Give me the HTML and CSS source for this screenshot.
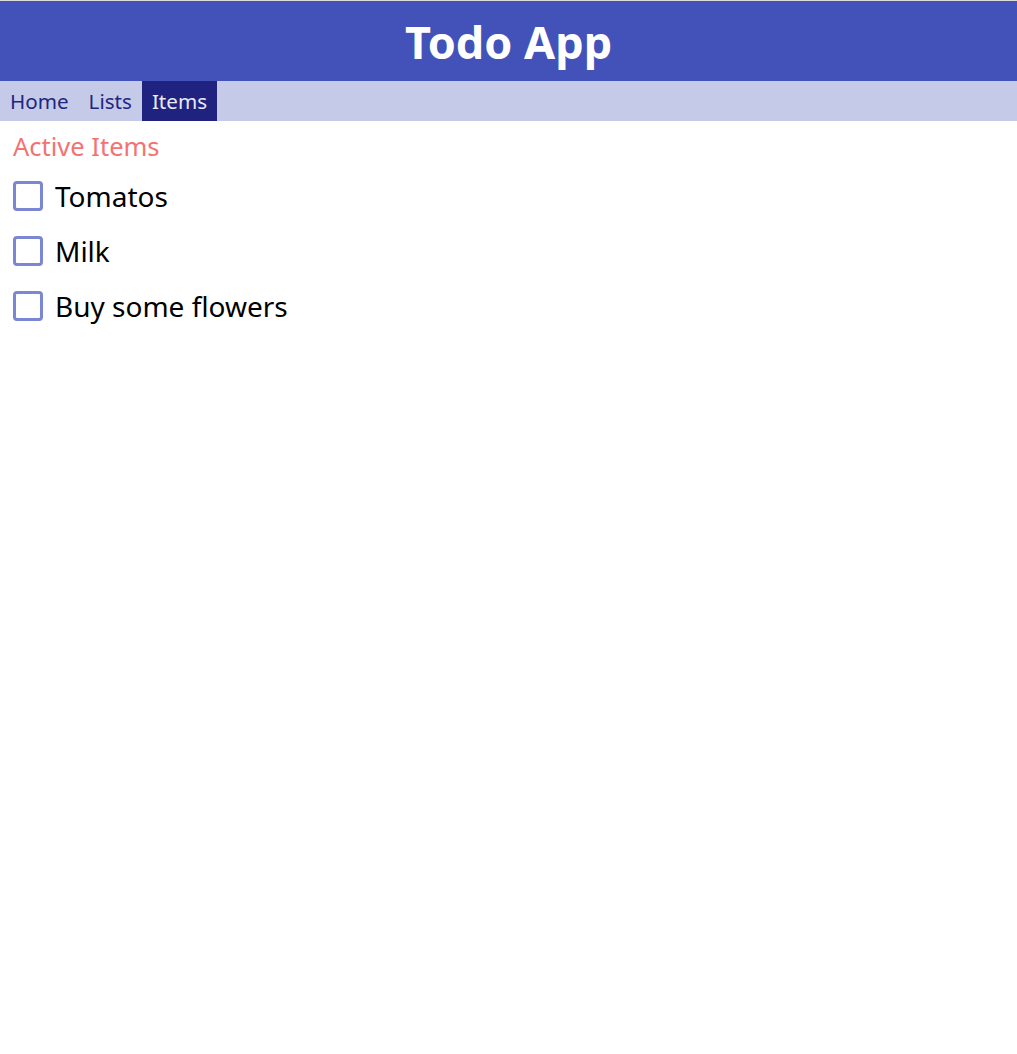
FILE: index.html
```html
<!DOCTYPE html>
<html>
<head>
<meta charset="utf-8">
<link rel="stylesheet" href="styles.css">
</head>
<body>
<header class="topbar"><h1 class="title">Todo App</h1></header>
<nav class="nav">
  <a class="nav-link">Home</a>
  <a class="nav-link">Lists</a>
  <a class="nav-link active">Items</a>
</nav>
<main class="content">
  <h2 class="section-title">Active Items</h2>
  <ul class="items">
    <li class="item"><span class="box"></span><span class="label">Tomatos</span></li>
    <li class="item"><span class="box"></span><span class="label">Milk</span></li>
    <li class="item"><span class="box"></span><span class="label">Buy some flowers</span></li>
  </ul>
</main>
</body>
</html>
```
FILE: styles.css
```css
html, body { margin: 0; padding: 0; background: #fff; }
body { font-family: "Noto Sans", "Open Sans", sans-serif; border-top: 1px solid #dcdcdc; }
.topbar { background: #4352b8; height: 80px; display: flex; align-items: center; justify-content: center; }
.title { margin: 0; color: #fff; font-size: 45px; font-weight: 700; line-height: 1; }
.nav { background: #c5cae9; height: 40px; display: flex; }
.nav-link { display: flex; align-items: center; padding: 0 10px; font-size: 20.6px; color: #1f2680; }
.nav-link.active { background: #1f237f; color: #e8eaf6; }
.content { padding: 0 13px; }
.section-title { margin: 8px 0 5px; font-size: 25.5px; line-height: 34px; font-weight: 400; color: #f47272; }
.items { list-style: none; margin: 0; padding: 0; }
.item { display: flex; align-items: center; gap: 12px; height: 55px; font-size: 28px; color: #000; }
.box { width: 24px; height: 24px; border: 3px solid #7c87d4; border-radius: 4px; flex: none; }
```
